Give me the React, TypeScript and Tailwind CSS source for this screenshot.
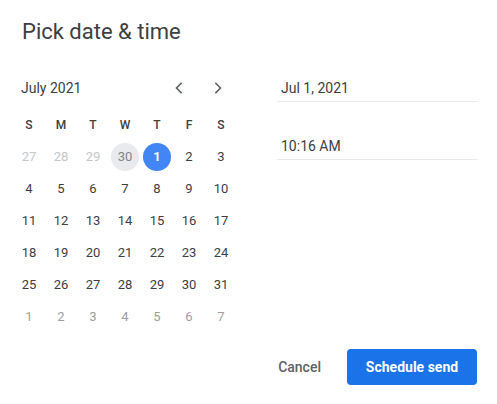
import { ReactNode } from 'react';

type Day = { n: number; kind: 'prev' | 'cur' | 'next' | 'today' | 'selected' };

const weekdays = ['S', 'M', 'T', 'W', 'T', 'F', 'S'];

function buildDays(): Day[] {
  const days: Day[] = [];
  [27, 28, 29].forEach((n) => days.push({ n, kind: 'prev' }));
  days.push({ n: 30, kind: 'today' });
  days.push({ n: 1, kind: 'selected' });
  for (let n = 2; n <= 31; n++) days.push({ n, kind: 'cur' });
  for (let n = 1; n <= 7; n++) days.push({ n, kind: 'next' });
  return days;
}

function Chevron({ dir }: { dir: 'left' | 'right' }) {
  return (
    <svg width="16" height="16" viewBox="0 0 16 16" fill="none">
      <path
        d={dir === 'left' ? 'M10 3.5 5.5 8l4.5 4.5' : 'M6 3.5 10.5 8 6 12.5'}
        stroke="#5f6368"
        strokeWidth={1.6}
        strokeLinecap="square"
      />
    </svg>
  );
}

function DayCell({ day }: { day: Day }) {
  let inner: ReactNode;
  if (day.kind === 'selected') {
    inner = (
      <span className="w-[28px] h-[28px] rounded-full bg-[#4285f4] text-white font-bold flex items-center justify-center">
        {day.n}
      </span>
    );
  } else if (day.kind === 'today') {
    inner = (
      <span className="w-[28px] h-[28px] rounded-full bg-[#e8eaed] text-[#80868b] flex items-center justify-center">
        {day.n}
      </span>
    );
  } else {
    const color =
      day.kind === 'prev' ? 'text-[#c4c7ca]' : day.kind === 'next' ? 'text-[#9aa0a6]' : 'text-[#3c4043]';
    inner = <span className={color}>{day.n}</span>;
  }
  return <div className="h-[32px] flex items-center justify-center text-[13px]">{inner}</div>;
}

export default function App() {
  const days = buildDays();

  return (
    <div className="w-[497px] h-[404px] bg-white flex flex-col font-['Roboto',sans-serif]">
      {/* Title */}
      <h1 className="pt-[18px] pl-[22px] text-[22px] leading-[28px] text-[#3c4043]">Pick date &amp; time</h1>

      <div className="flex mt-[26px]">
        {/* Calendar */}
        <div className="w-[224px] ml-[13px]">
          <div className="h-[32px] flex items-center">
            <span className="flex-1 pl-[8px] text-[14px] text-[#3c4043]">July 2021</span>
            <div className="flex gap-[7px] mr-[3px]">
              <button className="w-[32px] h-[32px] flex items-center justify-center">
                <Chevron dir="left" />
              </button>
              <button className="w-[32px] h-[32px] flex items-center justify-center">
                <Chevron dir="right" />
              </button>
            </div>
          </div>

          <div className="grid grid-cols-7 mt-[5px]">
            {weekdays.map((w, i) => (
              <div key={i} className="h-[32px] flex items-center justify-center text-[12px] font-medium text-[#3c4043]">
                {w}
              </div>
            ))}
            {days.map((d, i) => (
              <DayCell key={i} day={d} />
            ))}
          </div>
        </div>

        {/* Date / time fields */}
        <div className="ml-auto mr-[20px] w-[200px] text-[14px] text-[#3c4043]">
          <div className="pt-[6px] pb-[3px] pl-[4px] leading-[20px] border-b border-[#e8eaed]">Jul 1, 2021</div>
          <div className="mt-[28px] pt-[6px] pb-[3px] pl-[4px] leading-[20px] border-b border-[#e8eaed]">10:16 AM</div>
        </div>
      </div>

      {/* Actions */}
      <div className="flex justify-end items-center mt-[16px] pr-[20px] gap-[18px]">
        <button className="h-[36px] px-[8px] text-[14px] font-medium text-[#5f6368]">Cancel</button>
        <button className="w-[130px] h-[36px] rounded-[4px] bg-[#1a73e8] text-white text-[14px] font-bold">
          Schedule send
        </button>
      </div>
    </div>
  );
}
